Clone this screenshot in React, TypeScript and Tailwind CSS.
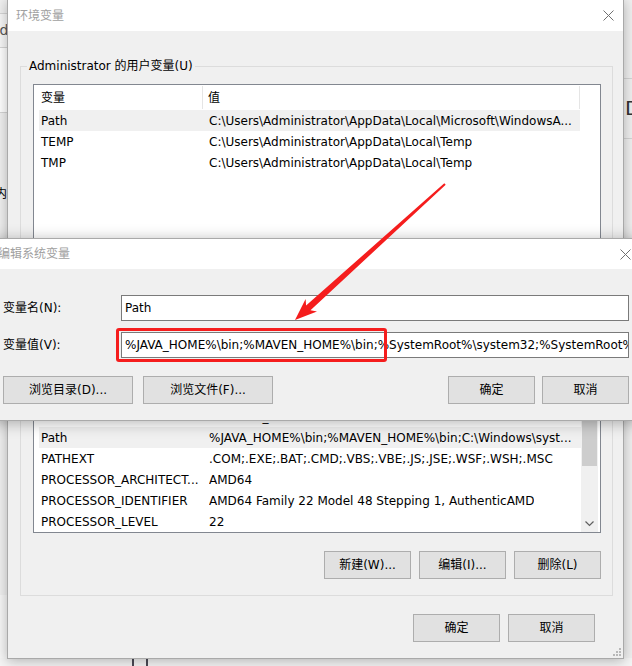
import React from "react";

const font = "font-['DejaVu_Sans','Noto_Sans_CJK_SC',sans-serif]";

function CloseIcon() {
  return (
    <svg width="11" height="11" viewBox="0 0 11 11" className="shrink-0">
      <path d="M0.5 0.5 L10.5 10.5 M10.5 0.5 L0.5 10.5" stroke="#707070" strokeWidth="1" fill="none" />
    </svg>
  );
}

function Btn({ children, w }: { children: React.ReactNode; w: string }) {
  return (
    <div className={`flex h-[28px] shrink-0 items-center justify-center border border-[#adadad] bg-[#e1e1e1] ${w}`}>
      {children}
    </div>
  );
}

function Row({ name, value, selected }: { name: string; value: string; selected?: boolean }) {
  return (
    <div className={`ml-[5px] flex h-[21px] shrink-0 items-center whitespace-nowrap ${selected ? "bg-[#f0f0f0]" : ""}`}>
      <div className="w-[170px] shrink-0 overflow-hidden pl-[2px]">{name}</div>
      <div className="overflow-hidden">{value}</div>
    </div>
  );
}

function ListHeader() {
  return (
    <div className="flex h-[25px] shrink-0 items-stretch">
      <div className="flex w-[168px] items-center pl-[7px]">变量</div>
      <div className="my-[1px] w-px bg-[#e5e5e5]" />
      <div className="flex flex-1 items-center pl-[5px]">值</div>
      <div className="my-[1px] w-px bg-[#e5e5e5]" />
    </div>
  );
}

const userVars = [
  { name: "Path", value: "C:\\Users\\Administrator\\AppData\\Local\\Microsoft\\WindowsA...", selected: true },
  { name: "TEMP", value: "C:\\Users\\Administrator\\AppData\\Local\\Temp" },
  { name: "TMP", value: "C:\\Users\\Administrator\\AppData\\Local\\Temp" },
];

const sysVars = [
  { name: "ComSpec", value: "C:\\Windows\\system32\\cmd.exe" },
  { name: "DriverData", value: "C:\\Windows\\System32\\Drivers\\DriverData" },
  { name: "JAVA_HOME", value: "C:\\Program Files\\Java\\jdk1.8.0_291" },
  { name: "MAVEN_HOME", value: "D:\\apache-maven-3.8.1" },
  { name: "NUMBER_OF_PROCESSORS", value: "12" },
  { name: "OS", value: "Windows_NT" },
  { name: "Path", value: "%JAVA_HOME%\\bin;%MAVEN_HOME%\\bin;C:\\Windows\\syst...", selected: true },
  { name: "PATHEXT", value: ".COM;.EXE;.BAT;.CMD;.VBS;.VBE;.JS;.JSE;.WSF;.WSH;.MSC" },
  { name: "PROCESSOR_ARCHITECT...", value: "AMD64" },
  { name: "PROCESSOR_IDENTIFIER", value: "AMD64 Family 22 Model 48 Stepping 1, AuthenticAMD" },
  { name: "PROCESSOR_LEVEL", value: "22" },
];

export default function App() {
  return (
    <div className={`relative h-[666px] w-[632px] overflow-hidden bg-[#f0f0f0] text-[12px] leading-[16px] text-black ${font}`}>
      {/* window behind */}
      <div className="absolute left-0 top-[13px] h-px w-[10px] bg-[#d5d5d5]" />
      <div className="absolute left-0 top-[14px] h-[33px] w-[10px] bg-[#f7f7f7]" />
      <div className="absolute left-[-9px] top-[22px] text-[14px] text-[#555]">ed</div>
      <div className="absolute left-0 top-[47px] h-px w-[10px] bg-[#d5d5d5]" />
      <div className="absolute left-0 top-[48px] h-[64px] w-[10px] bg-white" />
      <div className="absolute left-0 top-[112px] h-px w-[10px] bg-[#d5d5d5]" />
      <div className="absolute left-[-5px] top-[186px] text-[12px]">内</div>
      <div className="absolute left-0 top-[595px] h-[71px] w-[10px] bg-[#f7f7f7]" />
      <div className="absolute left-[620px] top-[78px] h-px w-[12px] bg-[#d5d5d5]" />
      <div className="absolute left-[625px] top-[96px] text-[20px] leading-[24px] text-[#333]">D</div>
      <div className="absolute left-[620px] top-[138px] h-px w-[12px] bg-[#d5d5d5]" />
      <div className="absolute left-[0px] top-[658px] h-[8px] w-[632px] bg-[#f5f5f5]" />
      <div className="absolute left-[132px] top-[655px] h-[16px] w-[16px] border-2 border-[#4a4a55]" />

      {/* 环境变量 */}
      <div className="absolute left-[7px] top-[-1px] flex h-[660px] w-[617px] flex-col border border-[#a9a9a9] bg-[#f0f0f0] shadow-[0_2px_12px_rgba(0,0,0,0.28)]">
        <div className="flex h-[31px] shrink-0 items-center justify-between bg-white pl-[8px] pr-[9px]">
          <span className="text-[#a0a0a0]">环境变量</span>
          <CloseIcon />
        </div>
        <div className="flex flex-1 flex-col pl-[12px] pr-[10px]">
          <fieldset className="mt-[27px] border border-[#dcdcdc] pb-[13px] pl-[12px] pr-[11px]">
            <legend className="-ml-[6px] px-[2px] leading-[16px]">Administrator 的用户变量(U)</legend>
            <div className="mt-[10px] flex h-[188px] border border-[#828790] bg-white">
              <div className="flex w-[546px] flex-col">
                <ListHeader />
                {userVars.map((v) => (
                  <Row key={v.name} {...v} />
                ))}
              </div>
            </div>
          </fieldset>
          <fieldset className="mt-[19px] border border-[#dcdcdc] pb-[16px] pl-[12px] pr-[11px]">
            <legend className="-ml-[6px] px-[2px] leading-[16px]">系统变量(S)</legend>
            <div className="mt-[10px] flex h-[202px] border border-[#828790] bg-white">
              <div className="flex w-[547px] flex-col">
                <ListHeader />
                <div className="flex flex-1 flex-col justify-end overflow-hidden">
                  {sysVars.map((v) => (
                    <Row key={v.name} {...v} />
                  ))}
                </div>
              </div>
              <div className="flex w-[17px] flex-col bg-[#f0f0f0]">
                <div className="ml-px h-[134px] w-[15px] bg-[#cdcdcd]" />
                <div className="mt-auto flex h-[17px] items-center justify-center">
                  <svg width="9" height="6" viewBox="0 0 9 6">
                    <path d="M0.5 0.5 L4.5 4.5 L8.5 0.5" stroke="#606060" strokeWidth="1.2" fill="none" />
                  </svg>
                </div>
              </div>
            </div>
            <div className="mt-[18px] flex justify-end gap-[8px]">
              <Btn w="w-[87px]">新建(W)...</Btn>
              <Btn w="w-[87px]">编辑(I)...</Btn>
              <Btn w="w-[87px]">删除(L)</Btn>
            </div>
          </fieldset>
          <div className="mt-[18px] flex justify-end gap-[8px] pr-[18px]">
            <Btn w="w-[87px]">确定</Btn>
            <Btn w="w-[87px]">取消</Btn>
          </div>
        </div>
        <div className="absolute bottom-[2px] right-[2px] grid grid-cols-3 gap-[1px]">
          <span className="h-[2px] w-[2px]" />
          <span className="h-[2px] w-[2px]" />
          <span className="h-[2px] w-[2px] bg-[#b8b8b8]" />
          <span className="h-[2px] w-[2px]" />
          <span className="h-[2px] w-[2px] bg-[#b8b8b8]" />
          <span className="h-[2px] w-[2px] bg-[#b8b8b8]" />
          <span className="h-[2px] w-[2px] bg-[#b8b8b8]" />
          <span className="h-[2px] w-[2px] bg-[#b8b8b8]" />
          <span className="h-[2px] w-[2px] bg-[#b8b8b8]" />
        </div>
      </div>

      {/* 编辑系统变量 */}
      <div className="absolute left-[-11px] top-[238px] flex h-[183px] w-[651px] flex-col border border-[#a9a9a9] bg-[#f0f0f0] shadow-[0_2px_14px_rgba(0,0,0,0.3)]">
        <div className="flex h-[30px] shrink-0 items-center justify-between bg-white pl-[8px] pr-[8px]">
          <span className="text-[#a0a0a0]">编辑系统变量</span>
          <CloseIcon />
        </div>
        <div className="flex flex-1 flex-col pl-[13px] pr-[10px]">
          <div className="mt-[26px] flex items-center">
            <div className="w-[118px] shrink-0">变量名(N):</div>
            <div className="flex h-[26px] flex-1 items-center border border-[#7a7a7a] bg-white pl-[3px]">Path</div>
          </div>
          <div className="mt-[11px] flex items-center">
            <div className="w-[118px] shrink-0">变量值(V):</div>
            <div className="flex h-[26px] flex-1 items-center overflow-hidden whitespace-nowrap border border-[#7a7a7a] bg-white pl-[3px]">
              %JAVA_HOME%\bin;%MAVEN_HOME%\bin;%SystemRoot%\system32;%SystemRoot%;%SystemRoot%\System32\Wbem
            </div>
          </div>
          <div className="mt-[18px] flex gap-[10px]">
            <Btn w="w-[130px]">浏览目录(D)...</Btn>
            <Btn w="w-[130px]">浏览文件(F)...</Btn>
            <div className="ml-auto flex gap-[7px]">
              <Btn w="w-[87px]">确定</Btn>
              <Btn w="w-[87px]">取消</Btn>
            </div>
          </div>
        </div>
      </div>

      {/* annotations */}
      <div className="absolute left-[116px] top-[328px] h-[34px] w-[271px] rounded-[3px] border-[3px] border-[#f51d1d]" />
      <svg className="pointer-events-none absolute left-0 top-0" width="632" height="666" viewBox="0 0 632 666">
        <polygon
          points="295,320 305.6,298.9 306.1,305.5 444.3,183.3 445.7,184.7 310.5,310.3 317,311.5"
          fill="#f51d1d"
        />
      </svg>
    </div>
  );
}
